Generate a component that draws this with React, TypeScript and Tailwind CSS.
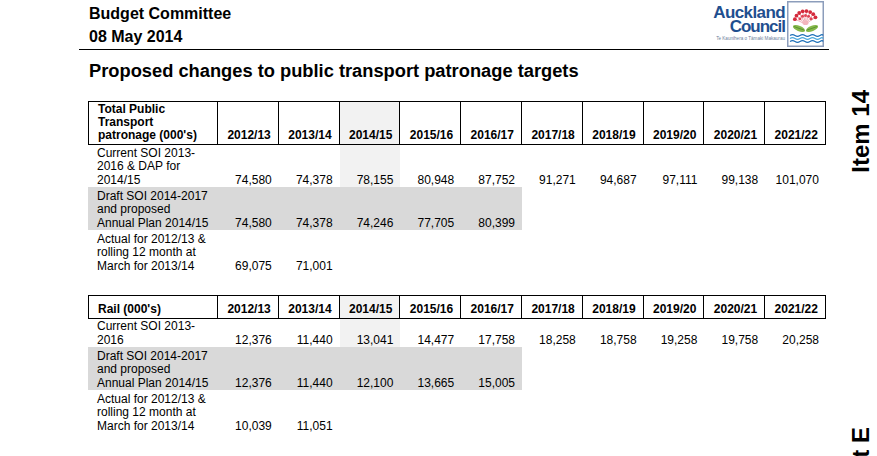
import React from "react";

const years = ["2012/13", "2013/14", "2014/15", "2015/16", "2016/17", "2017/18", "2018/19", "2019/20", "2020/21", "2021/22"];

type RowData = { label: string[]; values: string[]; grey?: boolean; h: string };

const gridCls = "grid grid-cols-[130px_repeat(10,minmax(0,1fr))] w-[738px]";

function HeaderRow({ label, h }: { label: string[]; h: string }) {
  return (
    <div className={`${gridCls} ${h}`}>
      <div className="border-t border-b border-l border-r border-black flex flex-col justify-end pl-[9px] pb-[2px] font-bold leading-[13px]">
        {label.map((l) => (
          <span key={l} className="block whitespace-nowrap">{l}</span>
        ))}
      </div>
      {years.map((y, i) => (
        <div
          key={y}
          className={`border-t border-b border-r border-black flex items-end justify-end pr-[7px] pb-[2px] font-bold leading-[13px] ${i === 2 ? "bg-[#f2f2f2]" : ""}`}
        >
          {y}
        </div>
      ))}
    </div>
  );
}

function DataRow({ row, first }: { row: RowData; first: boolean }) {
  return (
    <div className={`${gridCls} ${row.h}`}>
      <div className={`flex flex-col justify-end pl-[9px] leading-[13.5px] ${row.grey ? "bg-[#d9d9d9]" : ""}`}>
        {row.label.map((l) => (
          <span key={l} className="block whitespace-nowrap">{l}</span>
        ))}
      </div>
      {years.map((y, i) => {
        const bg = row.grey && i < 5 ? "bg-[#d9d9d9]" : first && i === 2 ? "bg-[#f2f2f2]" : "";
        return (
          <div key={y} className={`flex items-end justify-end pr-[7px] leading-[13.5px] ${bg}`}>
            {row.values[i] ?? ""}
          </div>
        );
      })}
    </div>
  );
}

function Table({ header, headerH, rows, className }: { header: string[]; headerH: string; rows: RowData[]; className?: string }) {
  return (
    <div className={`ml-[9px] text-[12px] ${className ?? ""}`}>
      <HeaderRow label={header} h={headerH} />
      {rows.map((r, i) => (
        <DataRow key={i} row={r} first={i === 0} />
      ))}
    </div>
  );
}

function Emblem() {
  const cx = 18.5;
  const cy = 21;
  const outer = [165, 145, 125, 105, 85, 65, 45, 25].map((a) => ({
    x: cx + 11 * Math.cos((a * Math.PI) / 180),
    y: cy - 11 * Math.sin((a * Math.PI) / 180),
  }));
  const inner = [150, 118, 90, 62, 30].map((a) => ({
    x: cx + 6.5 * Math.cos((a * Math.PI) / 180),
    y: cy - 6.5 * Math.sin((a * Math.PI) / 180),
  }));
  return (
    <svg width="37" height="46" viewBox="0 0 37 46">
      <rect x="0.75" y="0.75" width="35.5" height="44.5" fill="#ffffff" stroke="#8c9dbb" strokeWidth="1.5" />
      {outer.map((p, i) => (
        <line key={`l${i}`} x1={cx} y1={cy + 2} x2={p.x} y2={p.y} stroke="#e27a86" strokeWidth="0.6" />
      ))}
      {outer.map((p, i) => (
        <circle key={`o${i}`} cx={p.x} cy={p.y} r="1.9" fill="#d42a3c" />
      ))}
      {inner.map((p, i) => (
        <circle key={`i${i}`} cx={p.x} cy={p.y} r="1.5" fill="#e04556" />
      ))}
      <ellipse cx="18.5" cy="22" rx="3" ry="2" fill="#f3b6bd" />
      <ellipse cx="12" cy="27.5" rx="6.5" ry="2.8" fill="#86b84a" transform="rotate(22 12 27.5)" />
      <ellipse cx="25" cy="27.5" rx="6.5" ry="2.8" fill="#86b84a" transform="rotate(-22 25 27.5)" />
      <path d="M7 25.5 Q12 27.5 17 29" stroke="#4f8a2b" strokeWidth="0.8" fill="none" />
      <path d="M30 25.5 Q25 27.5 20 29" stroke="#4f8a2b" strokeWidth="0.8" fill="none" />
      <path d="M3 34.5 q2.5 -1.6 5 0 t5 0 t5 0 t5 0 t5 0 t5 0 t3 0" stroke="#1e6fb8" strokeWidth="1.2" fill="none" />
      <path d="M3 37.5 q2.5 -1.6 5 0 t5 0 t5 0 t5 0 t5 0 t5 0 t3 0" stroke="#4aa8dc" strokeWidth="1.2" fill="none" />
      <path d="M3 40.5 q2.5 -1.6 5 0 t5 0 t5 0 t5 0 t5 0 t5 0 t3 0" stroke="#1e6fb8" strokeWidth="1.2" fill="none" />
    </svg>
  );
}

export default function App() {
  const t1: RowData[] = [
    {
      label: ["Current SOI 2013-", "2016 & DAP for", "2014/15"],
      values: ["74,580", "74,378", "78,155", "80,948", "87,752", "91,271", "94,687", "97,111", "99,138", "101,070"],
      h: "h-[42px]",
    },
    {
      label: ["Draft SOI 2014-2017", "and proposed", "Annual Plan 2014/15"],
      values: ["74,580", "74,378", "74,246", "77,705", "80,399"],
      grey: true,
      h: "h-[43px]",
    },
    {
      label: ["Actual for 2012/13 &", "rolling 12 month at", "March for 2013/14"],
      values: ["69,075", "71,001"],
      h: "h-[43px]",
    },
  ];
  const t2: RowData[] = [
    {
      label: ["Current SOI 2013-", "2016"],
      values: ["12,376", "11,440", "13,041", "14,477", "17,758", "18,258", "18,758", "19,258", "19,758", "20,258"],
      h: "h-[28px]",
    },
    {
      label: ["Draft SOI 2014-2017", "and proposed", "Annual Plan 2014/15"],
      values: ["12,376", "11,440", "12,100", "13,665", "15,005"],
      grey: true,
      h: "h-[43px]",
    },
    {
      label: ["Actual for 2012/13 &", "rolling 12 month at", "March for 2013/14"],
      values: ["10,039", "11,051"],
      h: "h-[43px]",
    },
  ];

  return (
    <div className="w-[877px] h-[456px] overflow-hidden bg-white text-black font-['Liberation_Sans',Arial,sans-serif] flex">
      <div className="w-[750px] ml-[79px] flex flex-col shrink-0">
        <div className="h-[49px] flex justify-between items-start">
          <div className="pl-[10px] pt-[1.5px] text-[16px] font-bold leading-[23px]">
            <div>Budget Committee</div>
            <div>08 May 2014</div>
          </div>
          <div className="flex items-start pt-[1px] pr-[5px] gap-[2px]">
            <div className="flex flex-col items-end pt-[5px] text-[#1f4f8f] font-bold">
              <span className="text-[17px] leading-[14px] tracking-[-0.6px]">Auckland</span>
              <span className="text-[17px] leading-[14px] tracking-[-1px]">Council</span>
              <span className="text-[4.6px] leading-[6px] font-normal text-[#6d7f9c] mt-[2px] whitespace-nowrap">Te Kaunihera o Tāmaki Makaurau</span>
            </div>
            <Emblem />
          </div>
        </div>
        <div className="h-px bg-black" />
        <div className="pl-[10px] mt-[12px] text-[18.3px] font-bold leading-[18px] whitespace-nowrap">
          Proposed changes to public transport patronage targets
        </div>
        <Table className="mt-[21px]" header={["Total Public", "Transport", "patronage (000's)"]} headerH="h-[44px]" rows={t1} />
        <Table className="mt-[22px]" header={["Rail (000's)"]} headerH="h-[24px]" rows={t2} />
      </div>
      <div className="flex-1 flex flex-col items-start pl-[20px] pt-[90px] gap-[254px] font-bold text-[24px] leading-[24px]">
        <div className="[writing-mode:vertical-rl] rotate-180 whitespace-nowrap">Item 14</div>
        <div className="[writing-mode:vertical-rl] rotate-180 whitespace-nowrap">Attachment E</div>
      </div>
    </div>
  );
}
